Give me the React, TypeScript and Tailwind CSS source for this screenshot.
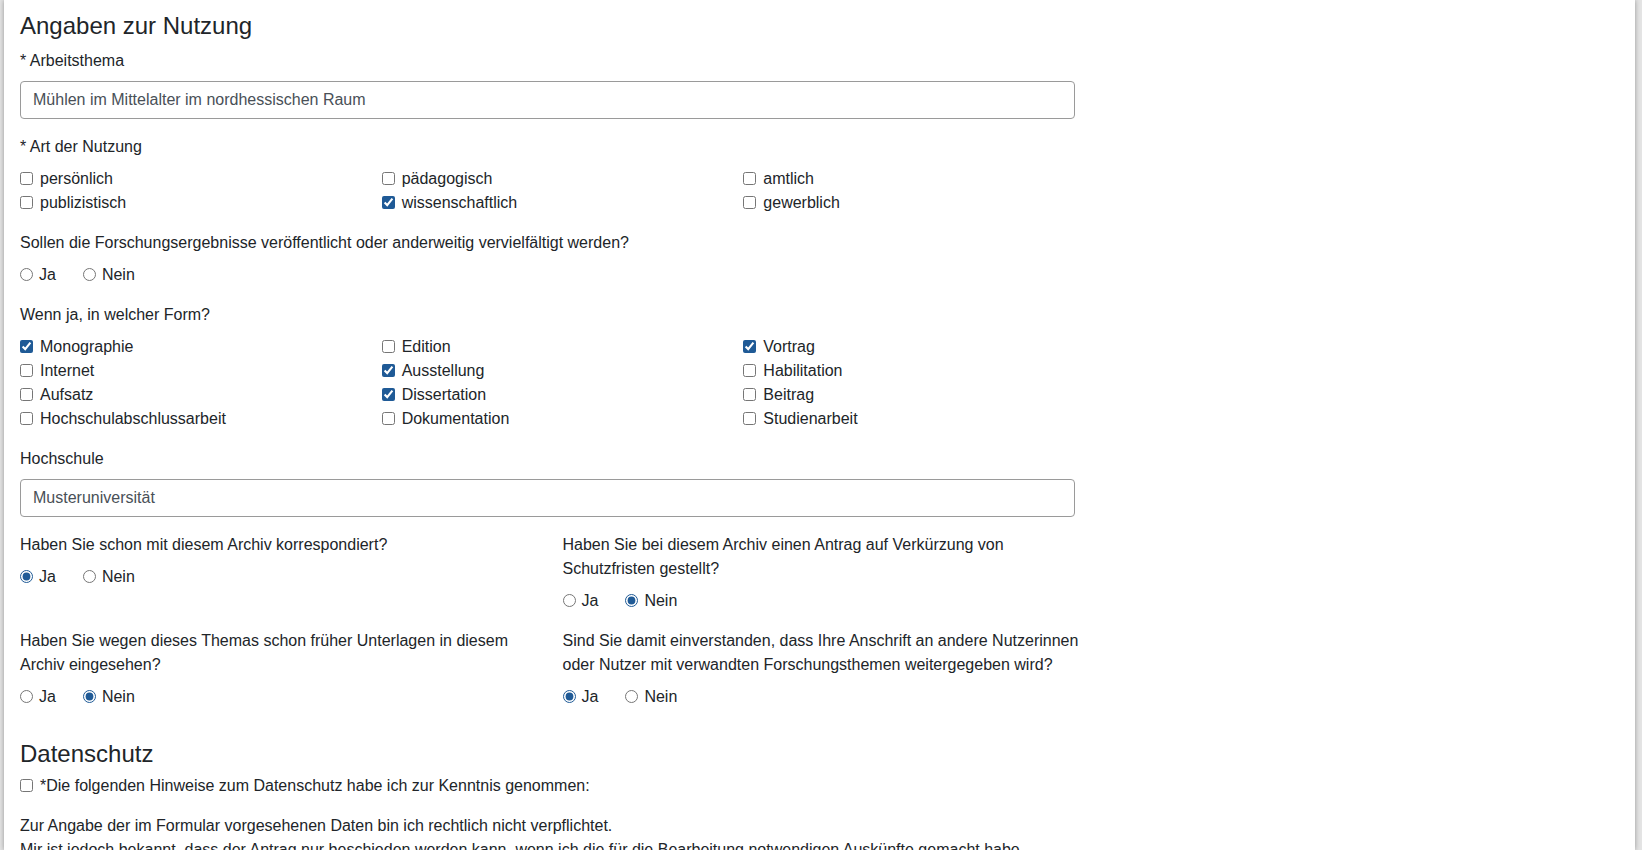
import React from "react";

type Opt = { label: string; checked?: boolean };

function Check({ label, checked }: Opt) {
  return (
    <label className="flex items-center h-6 gap-[7px] whitespace-nowrap">
      <input
        type="checkbox"
        defaultChecked={checked}
        className="m-0 w-[13px] h-[13px] shrink-0 accent-[#1f5a96]"
      />
      <span>{label}</span>
    </label>
  );
}

function RadioGroup({ name, value }: { name: string; value?: "ja" | "nein" }) {
  return (
    <div className="flex items-center h-6 gap-[27px]">
      <label className="flex items-center gap-[6px]">
        <input
          type="radio"
          name={name}
          defaultChecked={value === "ja"}
          className="m-0 w-[13px] h-[13px] accent-[#1f5a96]"
        />
        <span>Ja</span>
      </label>
      <label className="flex items-center gap-[6px]">
        <input
          type="radio"
          name={name}
          defaultChecked={value === "nein"}
          className="m-0 w-[13px] h-[13px] accent-[#1f5a96]"
        />
        <span>Nein</span>
      </label>
    </div>
  );
}

const nutzung: Opt[] = [
  { label: "persönlich" },
  { label: "pädagogisch" },
  { label: "amtlich" },
  { label: "publizistisch" },
  { label: "wissenschaftlich", checked: true },
  { label: "gewerblich" },
];

const formen: Opt[] = [
  { label: "Monographie", checked: true },
  { label: "Edition" },
  { label: "Vortrag", checked: true },
  { label: "Internet" },
  { label: "Ausstellung", checked: true },
  { label: "Habilitation" },
  { label: "Aufsatz" },
  { label: "Dissertation", checked: true },
  { label: "Beitrag" },
  { label: "Hochschulabschlussarbeit" },
  { label: "Dokumentation" },
  { label: "Studienarbeit" },
];

export default function App() {
  return (
    <div className="h-[850px] overflow-hidden bg-[#e4e4e4] font-['Liberation_Sans',Arial,sans-serif] text-[16px] leading-6 text-[#212529]">
      <div className="ml-[4px] mr-[7px] h-full bg-white pl-4 pt-3 shadow-[0_0_5px_rgba(0,0,0,0.35)]">
        <div className="w-[1055px]">
          <h4 className="text-[24px] leading-[1.2] font-normal mb-2">Angaben zur Nutzung</h4>

          <div className="mb-4">
            <label className="block mb-2">* Arbeitsthema</label>
            <input
              type="text"
              readOnly
              defaultValue="Mühlen im Mittelalter im nordhessischen Raum"
              className="block w-full h-[38px] px-3 border border-[#9a9a9a] rounded-[4px] text-[#495057] bg-white outline-none"
            />
          </div>

          <div className="mb-4">
            <div className="mb-2">* Art der Nutzung</div>
            <div className="grid grid-cols-3 gap-x-[30px]">
              {nutzung.map((o) => (
                <Check key={o.label} {...o} />
              ))}
            </div>
          </div>

          <div className="mb-4">
            <div className="mb-2">
              Sollen die Forschungsergebnisse veröffentlicht oder anderweitig vervielfältigt werden?
            </div>
            <RadioGroup name="veroeff" />
          </div>

          <div className="mb-4">
            <div className="mb-2">Wenn ja, in welcher Form?</div>
            <div className="grid grid-cols-3 gap-x-[30px]">
              {formen.map((o) => (
                <Check key={o.label} {...o} />
              ))}
            </div>
          </div>

          <div className="mb-4">
            <label className="block mb-2">Hochschule</label>
            <input
              type="text"
              readOnly
              defaultValue="Musteruniversität"
              className="block w-full h-[38px] px-3 border border-[#9a9a9a] rounded-[4px] text-[#495057] bg-white outline-none"
            />
          </div>

          <div className="grid grid-cols-2 gap-x-[30px] mb-4">
            <div>
              <div className="mb-2">Haben Sie schon mit diesem Archiv korrespondiert?</div>
              <RadioGroup name="korr" value="ja" />
            </div>
            <div>
              <div className="mb-2 whitespace-nowrap">
                Haben Sie bei diesem Archiv einen Antrag auf Verkürzung von
                <br />
                Schutzfristen gestellt?
              </div>
              <RadioGroup name="schutz" value="nein" />
            </div>
          </div>

          <div className="grid grid-cols-2 gap-x-[30px]">
            <div>
              <div className="mb-2 whitespace-nowrap">
                Haben Sie wegen dieses Themas schon früher Unterlagen in diesem
                <br />
                Archiv eingesehen?
              </div>
              <RadioGroup name="frueher" value="nein" />
            </div>
            <div>
              <div className="mb-2 whitespace-nowrap">
                Sind Sie damit einverstanden, dass Ihre Anschrift an andere Nutzerinnen
                <br />
                oder Nutzer mit verwandten Forschungsthemen weitergegeben wird?
              </div>
              <RadioGroup name="anschrift" value="ja" />
            </div>
          </div>

          <h4 className="text-[24px] leading-[1.2] font-normal mt-[31px] mb-[5px]">Datenschutz</h4>
          <div className="mb-4">
            <Check label="*Die folgenden Hinweise zum Datenschutz habe ich zur Kenntnis genommen:" />
          </div>
          <p>
            Zur Angabe der im Formular vorgesehenen Daten bin ich rechtlich nicht verpflichtet.
            <br />
            Mir ist jedoch bekannt, dass der Antrag nur beschieden werden kann, wenn ich die für die
            Bearbeitung notwendigen Auskünfte gemacht habe.
          </p>
        </div>
      </div>
    </div>
  );
}
